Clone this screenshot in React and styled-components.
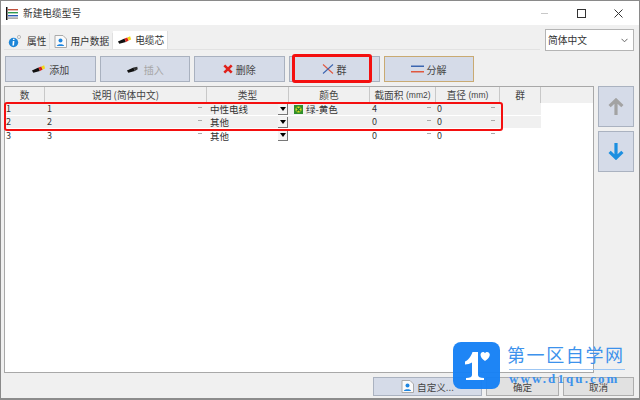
import React from "react";
import styled, { createGlobalStyle } from "styled-components";

const Global = createGlobalStyle`
  html, body { margin: 0; padding: 0; background: #f0f0f0; }
  body { font-family: "Noto Sans CJK SC", "Liberation Sans", sans-serif; color: #222; }
`;

const Window = styled.div`
  position: relative;
  width: 640px;
  height: 400px;
  overflow: hidden;
  box-sizing: border-box;
  border: 1px solid #8a8a8a;
  border-bottom: 2px solid #8c8c8c;
  display: flex;
  flex-direction: column;
  background: #f0f0f0;
`;

const TitleBar = styled.div`
  height: 24px;
  background: #fff;
  display: flex;
  align-items: center;
  padding-left: 5px;
  font-size: 9.7px;
  color: #333;
  gap: 5px;
`;

const WinButtons = styled.div`
  margin-left: auto;
  display: flex;
  align-items: center;
  gap: 28px;
  padding-right: 16px;
`;

const TopRow = styled.div`
  height: 25px;
  display: flex;
  align-items: flex-end;
  padding: 0 5px 0 3px;
`;

const Tabs = styled.div`
  display: flex;
  align-items: flex-end;
  flex: 1;
  height: 18px;
  margin-right: 5px;
  border-bottom: 1px solid #e2e2e2;
`;

const Tab = styled.div`
  height: ${(p) => (p.$active ? 18 : 16)}px;
  display: flex;
  align-items: center;
  gap: 3px;
  padding: 0 3px 0 4px;
  font-size: 9.7px;
  background: ${(p) => (p.$active ? "#fff" : "#f0f0f0")};
  border-right: 1px solid #e0e0e0;
  color: #333;
`;

const LangSelect = styled.div`
  width: 89px;
  height: 22px;
  margin-bottom: -1px;
  box-sizing: border-box;
  background: #fff;
  border: 1px solid #b4b4b4;
  display: flex;
  align-items: center;
  justify-content: space-between;
  padding: 0 5px 0 2px;
  font-size: 9.75px;
  color: #333;
`;

const Toolbar = styled.div`
  display: flex;
  gap: 4px;
  padding: 6px 0 0 4px;
  height: 26px;
`;

const ToolButton = styled.div`
  width: ${(p) => p.$w}px;
  height: 26px;
  box-sizing: border-box;
  display: flex;
  align-items: center;
  justify-content: center;
  gap: 3px;
  font-size: 10px;
  background: #d5dbe8;
  border: 1px solid ${(p) => (p.$gold ? "#c9aa72" : "#a9b1bf")};
  color: ${(p) => (p.$off ? "#a6a6a6" : "#444")};
`;

const Main = styled.div`
  display: flex;
  gap: 4px;
  padding: 4px 5px 0 3px;
  height: 287px;
`;

const Table = styled.div`
  flex: 1;
  background: #fff;
  border: 1px solid #a8a8a8;
  box-sizing: border-box;
  display: flex;
  flex-direction: column;
`;

const COLS = "40px 162px 82px 81px 66px 64px 41px";

const HeaderRow = styled.div`
  display: grid;
  grid-template-columns: ${COLS} 1fr;
  height: 16px;
  background: #f0f0f0;
  font-size: 9.7px;
  color: #444;
`;

const HeaderCell = styled.div`
  display: flex;
  align-items: center;
  justify-content: center;
  gap: 2.5px;
  border-right: 1px solid #c8c8c8;
  white-space: nowrap;
`;

const Unit = styled.span`
  font-family: "Liberation Sans", sans-serif;
  font-size: 8.5px;
`;

const Row = styled.div`
  display: grid;
  grid-template-columns: ${COLS};
  height: 13px;
  width: 536px;
  background: ${(p) => (p.$selected ? "#f0f0f0" : "#fff")};
  line-height: 12px;
  color: #333;
  border-bottom: ${(p) => (p.$selected ? "1px solid #fff" : "none")};
  box-sizing: border-box;
`;

const Cell = styled.div`
  display: flex;
  align-items: center;
  padding-left: ${(p) => p.$pl || 0}px;
  gap: 3px;
  white-space: nowrap;
  font-size: ${(p) => p.$size || 9}px;
  overflow: hidden;
`;

const Dash = styled.span`
  margin-left: auto;
  margin-right: 5px;
  width: 4px;
  height: 1px;
  background: #aaa;
  flex: none;
  position: relative;
  top: -2px;
`;

const DropBtn = styled.span`
  margin-left: auto;
  margin-right: 1px;
  width: 10px;
  height: 11px;
  box-sizing: border-box;
  background: #f4f4f4;
  border-right: 1px solid #777;
  border-bottom: 1px solid #777;
  display: flex;
  align-items: center;
  justify-content: center;
  flex: none;

  &::after {
    content: "";
    border-left: 3.5px solid transparent;
    border-right: 3.5px solid transparent;
    border-top: 4px solid #000;
  }
`;

const SideButtons = styled.div`
  width: 36px;
  display: flex;
  flex-direction: column;
  gap: 4px;
`;

const SideButton = styled.div`
  height: 41px;
  box-sizing: border-box;
  background: #d5dbe8;
  border: 1px solid #aab2c0;
  display: flex;
  align-items: center;
  justify-content: center;
`;

const Footer = styled.div`
  display: flex;
  gap: 4px;
  justify-content: flex-end;
  padding: 4px 5px 0 0;
`;

const FootButton = styled.div`
  width: ${(p) => p.$w}px;
  height: 19px;
  box-sizing: border-box;
  display: flex;
  align-items: center;
  justify-content: center;
  gap: 3px;
  font-size: 9.6px;
  color: #444;
  background: ${(p) => (p.$blue ? "#d5dbe8" : "#e1e1e1")};
  border: 1px solid ${(p) => (p.$blue ? "#aab2c0" : "#adadad")};
`;

const RedBox = styled.div`
  position: absolute;
  box-sizing: border-box;
  border: ${(p) => p.$t}px solid #f40f0f;
  border-radius: 3px;
  left: ${(p) => p.$x}px;
  top: ${(p) => p.$y}px;
  width: ${(p) => p.$w}px;
  height: ${(p) => p.$h}px;
  pointer-events: none;
`;

const Mark = styled.div`
  position: absolute;
  left: 452px;
  top: 341px;
  display: flex;
  gap: 7px;
`;

const MarkLogo = styled.div`
  width: 47px;
  height: 47px;
  border-radius: 8px;
  background: rgba(21, 128, 245, 0.96);
`;

const MarkText = styled.div`
  display: flex;
  flex-direction: column;
  color: #3d92ec;
`;

const MarkName = styled.div`
  font-size: 18px;
  line-height: 24px;
  letter-spacing: 1.6px;
  white-space: nowrap;
`;

const MarkUrl = styled.div`
  margin: 3px 0 0 2px;
  border-top: 1px solid #9cc6f4;
  padding-top: 2px;
  font-family: "Liberation Serif", serif;
  font-weight: 700;
  font-size: 13px;
  line-height: 14px;
  letter-spacing: 2.1px;
  white-space: nowrap;
`;

const CoreIcon = ({ off }) => (
  <svg width="15" height="10" viewBox="0 0 16 10">
    <path d="M1 6.5 L8 3.5 L9.5 7 L2.5 9 Z" fill="#111" />
    {!off && <path d="M8 3.5 L11 2.2 L12.5 5.6 L9.5 7 Z" fill="#d8261c" />}
    {!off && <path d="M11 2.2 L14 1 L15 4.4 L12.5 5.6 Z" fill="#f3d916" />}
    {off && <path d="M8 3.5 L12 2.5 L12.5 5.2 L9.5 7 Z" fill="#333" />}
  </svg>
);

const LogoLines = () => (
  <svg width="12" height="13" viewBox="0 0 12 13">
    <rect x="0" y="0" width="1.5" height="13" fill="#111" />
    <rect x="2" y="2" width="10" height="1.4" fill="#c0503c" />
    <rect x="2" y="5" width="10" height="1.4" fill="#2f9a50" />
    <rect x="2" y="8" width="10" height="1.4" fill="#2a58b8" />
    <rect x="2" y="10.5" width="10" height="1.2" fill="#888" />
  </svg>
);

const InfoIcon = () => (
  <svg width="16" height="14" viewBox="0 0 16 14">
    <circle cx="5.5" cy="8.5" r="4.7" fill="#1d86d8" />
    <path d="M4.8 7 H6.4 L6 11.5 H4.4 Z M5 4.8 H6.6 L6.5 6 H4.9 Z" fill="#fff" />
    <circle cx="11" cy="3" r="1.6" fill="none" stroke="#bbb" />
  </svg>
);

const UserDoc = ({ size = 13 }) => (
  <svg width={size} height={size} viewBox="0 0 13 13">
    <path d="M1 .5 H9 L12.5 4 V12.5 H1 Z" fill="#fafafa" stroke="#aaa" />
    <circle cx="6.5" cy="5.5" r="2" fill="#1f86e0" />
    <path d="M2.8 11 C3 8.5 10 8.5 10.2 11 Z" fill="#1f86e0" />
  </svg>
);

const Cross = () => (
  <svg width="10" height="10" viewBox="0 0 10 10">
    <path d="M1.3 1.3 L8.7 8.7 M8.7 1.3 L1.3 8.7" stroke="#e0211b" strokeWidth="2.6" />
  </svg>
);

const GroupIcon = () => (
  <svg width="12" height="10" viewBox="0 0 12 10">
    <path d="M1 .5 C4 3 8 7 11 9.5" stroke="#e0583f" strokeWidth="1.1" fill="none" />
    <path d="M11 .5 C8 3 4 7 1 9.5" stroke="#3c66b0" strokeWidth="1.1" fill="none" />
  </svg>
);

const SplitIcon = () => (
  <svg width="13" height="8" viewBox="0 0 13 8">
    <rect y="0.5" width="13" height="1.5" fill="#3c66b0" />
    <rect y="6" width="13" height="1.5" fill="#e0583f" />
  </svg>
);

const Arrow = ({ up, color }) => (
  <svg width="16" height="17" viewBox="0 0 16 17" style={{ transform: up ? "none" : "rotate(180deg)" }}>
    <path d="M8 2 V17 M1.6 8.2 L8 2 L14.4 8.2" stroke={color} strokeWidth="3.2" fill="none" />
  </svg>
);

const Swatch = () => (
  <svg width="9" height="9" viewBox="0 0 9 9">
    <rect width="9" height="9" fill="#2f8f2c" />
    <circle cx="4.5" cy="4.5" r="3" fill="#d9e021" />
    <path d="M2.5 2.5 L6.5 6.5 M6.5 2.5 L2.5 6.5" stroke="#1f7a24" strokeWidth="1.2" />
  </svg>
);

const rows = [
  { n: "1", type: "中性电线", color: "绿-黄色", area: "4", selected: true },
  { n: "2", type: "其他", area: "0", selected: true },
  { n: "3", type: "其他", area: "0" },
];

const headers = [
  { zh: "数" },
  { zh: "说明 (简体中文)" },
  { zh: "类型" },
  { zh: "颜色" },
  { zh: "截面积", unit: "(mm2)" },
  { zh: "直径", unit: "(mm)" },
  { zh: "群" },
];

export default function App() {
  return (
    <Window>
      <Global />
      <TitleBar>
        <LogoLines />
        新建电缆型号
        <WinButtons>
          <svg width="9" height="9" viewBox="0 0 9 9">
            <path d="M1 4.5 H8" stroke="#c8c8c8" />
          </svg>
          <svg width="9" height="9" viewBox="0 0 9 9">
            <rect x=".5" y=".5" width="8" height="8" fill="none" stroke="#333" />
          </svg>
          <svg width="9" height="9" viewBox="0 0 9 9">
            <path d="M.5 .5 L8.5 8.5 M8.5 .5 L.5 8.5" stroke="#333" />
          </svg>
        </WinButtons>
      </TitleBar>
      <TopRow>
        <Tabs>
          <Tab><InfoIcon />属性</Tab>
          <Tab><UserDoc />用户数据</Tab>
          <Tab $active><CoreIcon />电缆芯</Tab>
        </Tabs>
        <LangSelect>
          简体中文
          <svg width="7" height="5" viewBox="0 0 7 5">
            <path d="M.5 .8 L3.5 3.8 L6.5 .8" stroke="#666" fill="none" />
          </svg>
        </LangSelect>
      </TopRow>
      <Toolbar>
        <ToolButton $w={90.5}><CoreIcon />添加</ToolButton>
        <ToolButton $w={90.5} $off><CoreIcon off />插入</ToolButton>
        <ToolButton $w={90.5}><Cross />删除</ToolButton>
        <ToolButton $w={91}><GroupIcon />群</ToolButton>
        <ToolButton $w={90} $gold><SplitIcon />分解</ToolButton>
      </Toolbar>
      <Main>
        <Table>
          <HeaderRow>
            {headers.map((h) => (
              <HeaderCell key={h.zh}>
                {h.zh}
                {h.unit && <Unit>{h.unit}</Unit>}
              </HeaderCell>
            ))}
            <div />
          </HeaderRow>
          {rows.map((r) => (
            <Row key={r.n} $selected={r.selected}>
              <Cell $pl={1}>{r.n}</Cell>
              <Cell $pl={2}>{r.n}<Dash /></Cell>
              <Cell $pl={3} $size={9.5}>{r.type}<DropBtn /></Cell>
              <Cell $pl={5} $size={9.5}>
                {r.color && <Swatch />}
                {r.color}
              </Cell>
              <Cell $pl={2}>{r.area}<Dash /></Cell>
              <Cell $pl={1}>0<Dash /></Cell>
              <Cell />
            </Row>
          ))}
        </Table>
        <SideButtons>
          <SideButton><Arrow up color="#a3a3a3" /></SideButton>
          <SideButton><Arrow color="#1c8fe0" /></SideButton>
        </SideButtons>
      </Main>
      <Footer>
        <FootButton $w={109} $blue><UserDoc />自定义...</FootButton>
        <FootButton $w={73}>确定</FootButton>
        <FootButton $w={71}>取消</FootButton>
      </Footer>
      <RedBox $t={3} $x={291} $y={53} $w={80} $h={29} />
      <RedBox $t={2} $x={3} $y={101} $w={499} $h={29} />
      <Mark>
        <MarkLogo>
          <svg width="47" height="47" viewBox="0 0 47 47">
            <path d="M12 19.5 C15 18.5 18 14.5 19.5 10 H25 V33 C25 35 27 36 31 36 V38 H13 V36 C17 36 19 35 19 33 V20.5 C17 21.5 14.5 22.5 12 22.5 Z" fill="#fff" />
            <path d="M32 19 C29 17 27.5 15 27.5 12.8 C27.5 9.8 30.8 9 32 11.2 C33.2 9 36.8 9.8 36.8 12.8 C36.8 15 35 17 32 19 Z" fill="#fff" />
          </svg>
        </MarkLogo>
        <MarkText>
          <MarkName>第一区自学网</MarkName>
          <MarkUrl>www.d1qu.com</MarkUrl>
        </MarkText>
      </Mark>
    </Window>
  );
}
